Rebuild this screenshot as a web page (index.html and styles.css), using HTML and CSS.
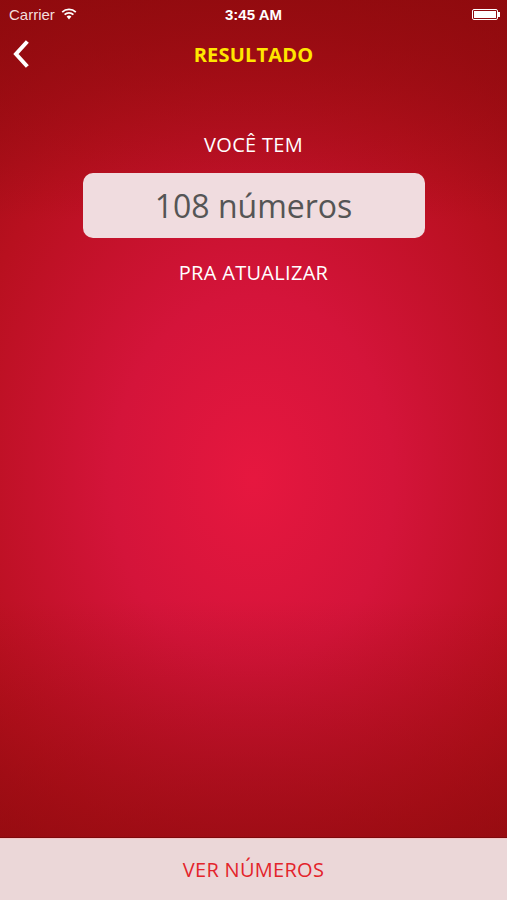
FILE: index.html
```html
<!DOCTYPE html>
<html lang="pt">
<head>
    <meta charset="UTF-8">
    <meta name="viewport" content="width=device-width, initial-scale=1.0">
    <title>Resultado</title>
    <link rel="stylesheet" href="styles.css">
</head>
<body>
    <div class="screen">
        <div class="status">
            <div class="status-left">
                <span>Carrier</span>
                <svg class="wifi" width="16" height="12" viewBox="0 0 16 12">
                    <path d="M8 11.5 L5.6 8.6 A3.6 3.6 0 0 1 10.4 8.6 Z" fill="#fff"/>
                    <path d="M3.6 6.6 A6.4 6.4 0 0 1 12.4 6.6" stroke="#fff" stroke-width="1.8" fill="none"/>
                    <path d="M1.2 4.1 A9.8 9.8 0 0 1 14.8 4.1" stroke="#fff" stroke-width="1.8" fill="none"/>
                </svg>
            </div>
            <div class="status-time">3:45 AM</div>
            <div class="status-right">
                <div class="battery"><div class="battery-fill"></div></div>
                <div class="battery-tip"></div>
            </div>
        </div>

        <nav class="navbar">
            <a href="#" class="back">
                <svg width="20" height="28" viewBox="0 0 20 28">
                    <path d="M15 3 L5 14 L15 25" stroke="#fff" stroke-width="4" fill="none" stroke-linecap="square"/>
                </svg>
            </a>
            <h1 class="title">RESULTADO</h1>
        </nav>

        <div class="content">
            <p class="label">VOCÊ TEM</p>
            <div class="count-box">108 números</div>
            <p class="label">PRA ATUALIZAR</p>
        </div>

        <a href="#" class="bottom-button">VER NÚMEROS</a>
    </div>
</body>
</html>
```

FILE: styles.css
```css
html, body {
    margin: 0;
    padding: 0;
}
body {
    font-family: "Open Sans", "Noto Sans", sans-serif;
    background-color: #8c0a0c;
}
.screen {
    height: 900px;
    display: flex;
    flex-direction: column;
    background:
        linear-gradient(to bottom, rgba(140, 10, 12, 0.75) 0, rgba(140, 10, 12, 0) 220px),
        linear-gradient(to top, rgba(140, 10, 12, 0.6) 62px, rgba(140, 10, 12, 0) 300px),
        radial-gradient(ellipse 500px 660px at 253px 480px, #e6173f 0%, #d4143a 28%, #b8101f 60%, #8c0a0c 100%);
}
.status {
    height: 28px;
    display: flex;
    align-items: center;
    justify-content: space-between;
    padding: 0 7px 0 9px;
    color: #fff;
    font-family: "Liberation Sans", Arial, sans-serif;
    font-size: 15px;
    position: relative;
}
.status-left {
    display: flex;
    align-items: center;
    gap: 6px;
    color: #f3dede;
}
.status-time {
    position: absolute;
    left: 0;
    right: 0;
    text-align: center;
    font-weight: bold;
    font-size: 15px;
}
.status-right {
    display: flex;
    align-items: center;
}
.battery {
    width: 26px;
    height: 11px;
    border: 1px solid #fff;
    border-radius: 2px;
    padding: 1px;
    box-sizing: border-box;
}
.battery-fill {
    width: 100%;
    height: 100%;
    background: #fff;
}
.battery-tip {
    width: 2px;
    height: 5px;
    background: #fff;
}
.navbar {
    height: 52px;
    display: flex;
    align-items: center;
    justify-content: center;
    position: relative;
}
.back {
    position: absolute;
    left: 11px;
    top: 12px;
}
.title {
    margin: 0;
    color: #ffe600;
    font-size: 20px;
    font-weight: bold;
    letter-spacing: 0.2px;
}
.content {
    flex: 1;
    display: flex;
    flex-direction: column;
    align-items: center;
    padding-top: 51px;
}
.label {
    margin: 0;
    color: #fff;
    font-size: 20px;
    letter-spacing: 0.3px;
}
.count-box {
    width: 342px;
    height: 65px;
    margin: 15px 0 21px;
    background: #f0dcdf;
    border-radius: 10px;
    display: flex;
    align-items: center;
    justify-content: center;
    color: #555;
    font-size: 32px;
}
.bottom-button {
    height: 61px;
    display: flex;
    align-items: center;
    justify-content: center;
    background: #ebd7d8;
    border-top: 1px solid #f6c6c8;
    box-shadow: 0 -1px 0 #7d0a0c;
    color: #e3242b;
    font-size: 20px;
    text-decoration: none;
    letter-spacing: 0.3px;
}
```
